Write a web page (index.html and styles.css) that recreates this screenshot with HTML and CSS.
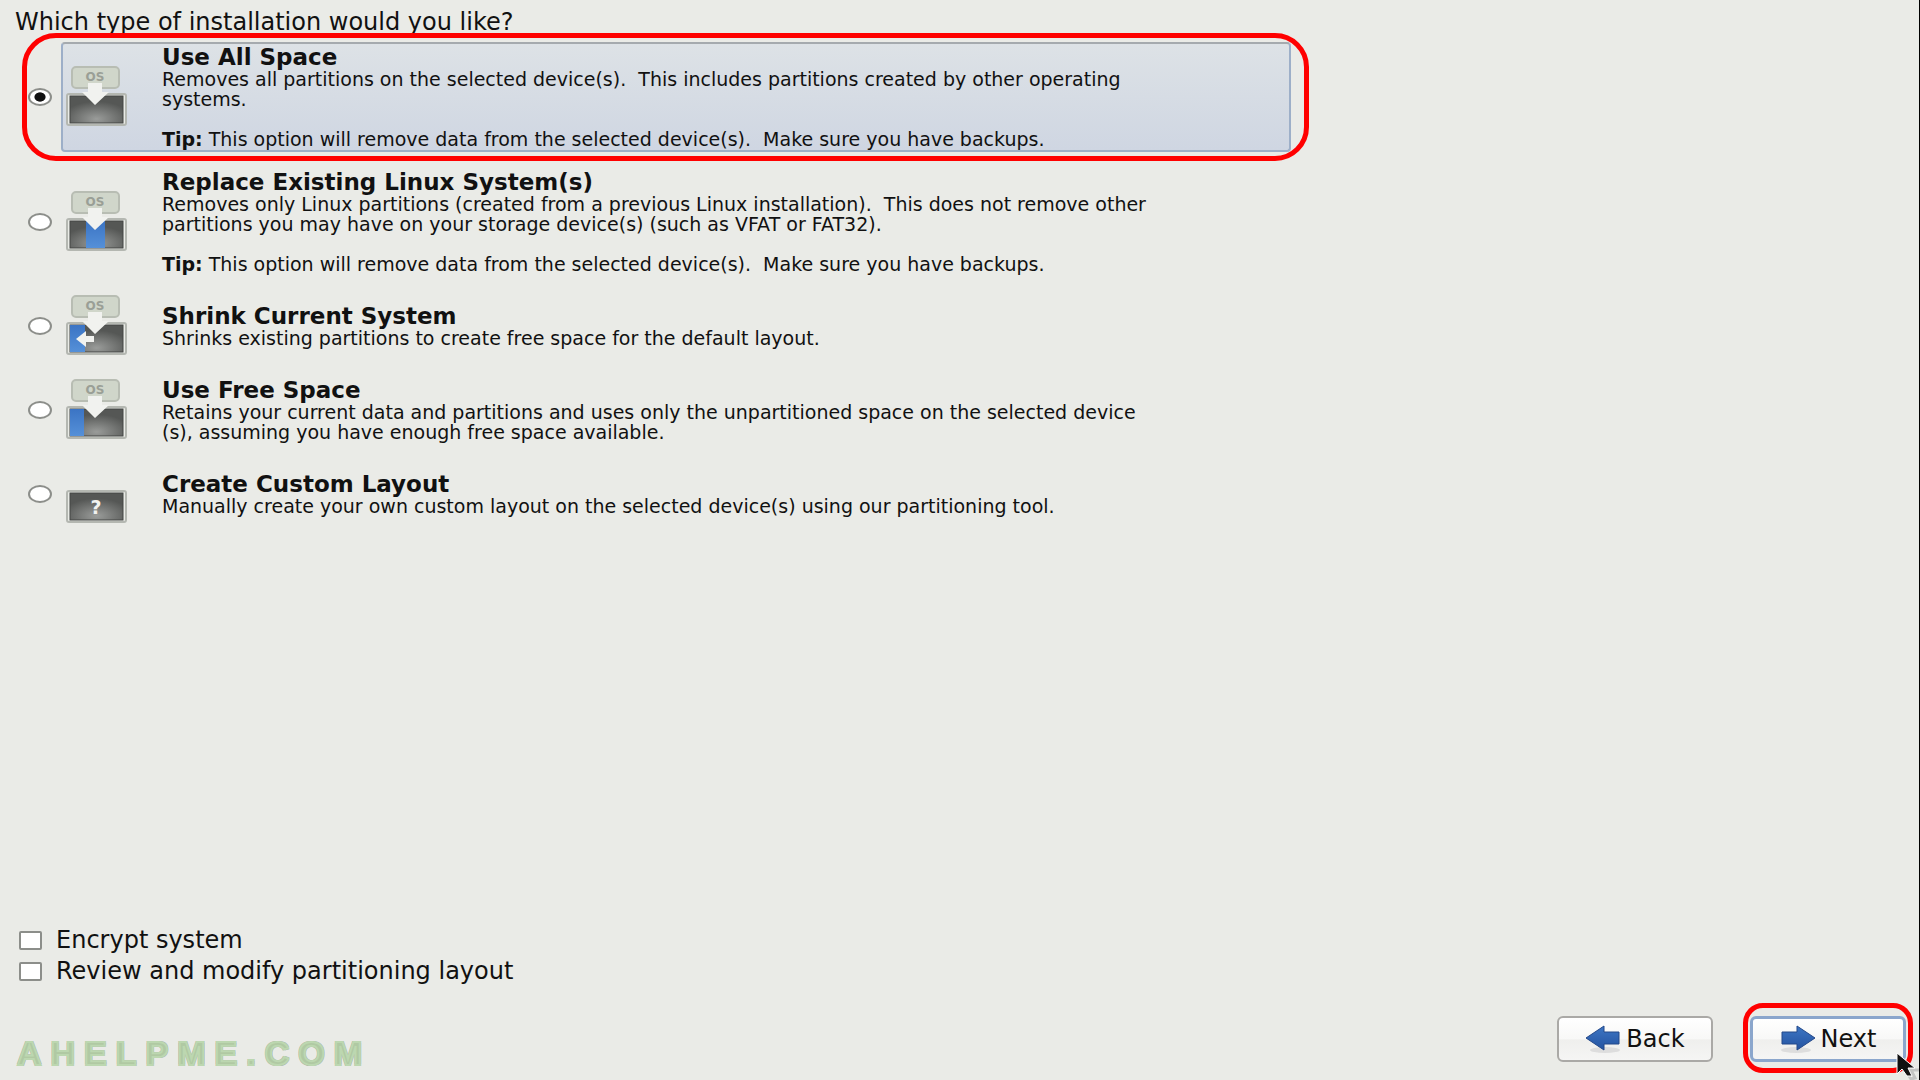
FILE: index.html
```html
<!DOCTYPE html>
<html lang="en">
<head>
	<meta charset="UTF-8">
	<title>Installation Type</title>
	<link rel="stylesheet" href="styles.css">
</head>
<body>
	<!-- Shared gradients and icon parts -->
	<svg class="defs" width="0" height="0" aria-hidden="true">
		<defs>
			<radialGradient id="screen" cx="50%" cy="85%" r="65%">
				<stop offset="0" stop-color="#9a9c9a"/>
				<stop offset="1" stop-color="#555755"/>
			</radialGradient>
			<linearGradient id="arrow-blue" x1="0" y1="0" x2="0" y2="1">
				<stop offset="0" stop-color="#3d76c4"/>
				<stop offset="1" stop-color="#2453a0"/>
			</linearGradient>
			<linearGradient id="part-blue" x1="0" y1="0" x2="0" y2="1">
				<stop offset="0" stop-color="#3b74c4"/>
				<stop offset="1" stop-color="#5590d8"/>
			</linearGradient>
			<g id="disk">
				<rect x="1" y="28" width="59" height="31" rx="2" fill="#e9ebe6" stroke="#b4b7b1" stroke-width="2"/>
				<rect x="4" y="30" width="53" height="27" fill="url(#screen)" stroke="#444644"/>
			</g>
			<g id="os">
				<rect x="6" y="1" width="47" height="21" rx="4" fill="#d0d6ca" stroke="#b8bdb3" stroke-width="2"/>
				<text x="29" y="15" class="os-text">OS</text>
				<path d="M22 17h14v9h7L29 39 16 26h6z" fill="#f1f2ef"/>
			</g>
		</defs>
	</svg>

	<form class="installer">
		<fieldset class="options">
			<legend>Which type of installation would you like?</legend>

			<div class="option highlighted">
				<input type="radio" name="type" id="use_all" checked>
				<label for="use_all">
					<svg width="61" height="60" viewBox="0 0 61 60" aria-hidden="true">
						<use href="#disk"/>
						<use href="#os"/>
					</svg>
					<span class="text">
						<strong class="title">Use All Space</strong>
						<span class="desc">Removes all partitions on the selected device(s).&nbsp; This includes partitions created by other operating<br>systems.<br><br><b>Tip:</b> This option will remove data from the selected device(s).&nbsp; Make sure you have backups.</span>
					</span>
				</label>
			</div>

			<div class="option">
				<input type="radio" name="type" id="replace">
				<label for="replace">
					<svg width="61" height="60" viewBox="0 0 61 60" aria-hidden="true">
						<use href="#disk"/>
						<rect x="20" y="30" width="19" height="27" fill="url(#part-blue)"/>
						<use href="#os"/>
					</svg>
					<span class="text">
						<strong class="title">Replace Existing Linux System(s)</strong>
						<span class="desc">Removes only Linux partitions (created from a previous Linux installation).&nbsp; This does not remove other<br>partitions you may have on your storage device(s) (such as VFAT or FAT32).<br><br><b>Tip:</b> This option will remove data from the selected device(s).&nbsp; Make sure you have backups.</span>
					</span>
				</label>
			</div>

			<div class="option">
				<input type="radio" name="type" id="shrink">
				<label for="shrink">
					<svg width="61" height="60" viewBox="0 0 61 60" aria-hidden="true">
						<use href="#disk"/>
						<rect x="4" y="30" width="15" height="27" fill="url(#part-blue)"/>
						<use href="#os"/>
						<path d="M10 44l10-8v5h8v6h-8v5z" fill="#f1f2ef"/>
					</svg>
					<span class="text">
						<strong class="title">Shrink Current System</strong>
						<span class="desc">Shrinks existing partitions to create free space for the default layout.</span>
					</span>
				</label>
			</div>

			<div class="option">
				<input type="radio" name="type" id="use_free">
				<label for="use_free">
					<svg width="61" height="60" viewBox="0 0 61 60" aria-hidden="true">
						<use href="#disk"/>
						<rect x="4" y="30" width="14" height="27" fill="url(#part-blue)"/>
						<use href="#os"/>
					</svg>
					<span class="text">
						<strong class="title">Use Free Space</strong>
						<span class="desc">Retains your current data and partitions and uses only the unpartitioned space on the selected device<br>(s), assuming you have enough free space available.</span>
					</span>
				</label>
			</div>

			<div class="option">
				<input type="radio" name="type" id="custom">
				<label for="custom">
					<svg width="61" height="60" viewBox="0 0 61 60" aria-hidden="true">
						<use href="#disk"/>
						<text x="30" y="51" class="question-mark">?</text>
					</svg>
					<span class="text">
						<strong class="title">Create Custom Layout</strong>
						<span class="desc">Manually create your own custom layout on the selected device(s) using our partitioning tool.</span>
					</span>
				</label>
			</div>
		</fieldset>

		<div class="checks">
			<div class="check">
				<input type="checkbox" id="encrypt">
				<label for="encrypt">Encrypt system</label>
			</div>
			<div class="check">
				<input type="checkbox" id="review">
				<label for="review">Review and modify partitioning layout</label>
			</div>
		</div>

		<footer>
			<div class="watermark">AHELPME.COM</div>
			<div class="buttons">
				<button type="button">
					<svg width="36" height="30" viewBox="0 0 36 30" aria-hidden="true">
						<ellipse cx="20" cy="26" rx="15" ry="3" fill="#ddd"/>
						<path d="M1 14L19 2v6h15v12H19v6z" fill="url(#arrow-blue)" stroke="#23488a"/>
					</svg>
					Back
				</button>
				<button type="button" class="next">
					<svg width="36" height="30" viewBox="0 0 36 30" aria-hidden="true">
						<ellipse cx="16" cy="26" rx="15" ry="3" fill="#ddd"/>
						<path d="M35 14L17 2v6H2v12h15v6z" fill="url(#arrow-blue)" stroke="#23488a"/>
					</svg>
					Next
				</button>
			</div>
		</footer>
	</form>

	<svg class="pointer" width="24" height="28" viewBox="0 0 24 28" aria-hidden="true">
		<path d="M10 19l5 8 4-1-4-8h8" fill="none" stroke="#c4c5c3" stroke-width="3"/>
		<path d="M1 1v21l5-5 5 7h5l-4-8h7z" fill="#111" stroke="#fff"/>
	</svg>
</body>
</html>
```

FILE: styles.css
```css
:root {
	--color-background: #eaebe7;
	--color-text: #111;
	--color-ring: #f00;
	--color-border: #8c8e8a;
	--color-focus: #8ba6cc;
}

* {
	box-sizing: border-box;
}

body {
	margin: 0;
	background: var(--color-background);
	color: var(--color-text);
	font-family: "DejaVu Sans", Verdana, sans-serif;
	font-size: 24px;
}

.defs {
	position: absolute;
}

.installer {
	display: flex;
	flex-direction: column;
	min-height: 100vh;
	border-right: 1px solid #000;
}

/* Installation types */
.options {
	display: flex;
	flex-direction: column;
	gap: 15px;
	width: 70%;
	margin: 0;
	padding: 0 0 0 28px;
	border: 0;
}

legend {
	margin-left: -28px;
	padding: 10px 0 8px 15px;
	line-height: 24px;
}

.option {
	display: flex;
	align-items: center;
	gap: 9px;
	position: relative;
}

.option label {
	display: flex;
	align-items: center;
	flex: 1;
	gap: 35px;
	padding: 2px 4px;
	border: 1px solid transparent;
	border-radius: 4px;
}

.option svg {
	flex: none;
	margin-bottom: 2px;
}

.highlighted {
	width: 96%;
}

.highlighted label {
	border: 2px solid #9dafc8;
	border-top-color: #a5aaae;
	padding: 1px 3px;
	background: linear-gradient(#dde2e6, #cfd6e2);
}

.title,
.desc {
	display: block;
}

.title {
	font-size: 23px;
	line-height: 24px;
}

.desc {
	font-size: 19px;
	line-height: 20px;
	white-space: nowrap;
}

.os-text {
	font: bold 12px "DejaVu Sans", sans-serif;
	fill: #9a9f96;
	text-anchor: middle;
}

.question-mark {
	font: bold 19px "DejaVu Sans", sans-serif;
	fill: #f1f2ef;
	text-anchor: middle;
}

/* Red markers */
.highlighted::after,
.next::after {
	content: "";
	position: absolute;
	border: 5px solid var(--color-ring);
	pointer-events: none;
}

.highlighted::after {
	inset: -9px -18px -9px -6px;
	border-radius: 34px;
}

.next::after {
	inset: -16px -10px -14px -10px;
	border-radius: 20px;
}

/* Form controls */
input {
	appearance: none;
	flex: none;
	margin: 0;
	background: #fff;
}

input[type="radio"] {
	width: 24px;
	height: 18px;
	border: 2px solid var(--color-border);
	border-radius: 50%;
}

input[type="radio"]:checked {
	background: radial-gradient(ellipse 6px 5px, #111 85%, #fff);
}

input[type="checkbox"] {
	width: 23px;
	height: 19px;
	border: 2px solid var(--color-border);
	border-radius: 2px;
}

.checks {
	margin-top: auto;
	padding-left: 19px;
}

.check {
	display: flex;
	align-items: center;
	gap: 14px;
	line-height: 31px;
}

footer {
	display: flex;
	justify-content: space-between;
	align-items: flex-start;
	padding: 29px 13px 18px 17px;
}

.watermark {
	margin: 16px 0 -12px;
	color: #b0c9a3;
	font: bold 34px/42px "Liberation Sans", Arial, sans-serif;
	letter-spacing: 9px;
	-webkit-text-stroke: 2px #bcd7b0;
	text-shadow: 1px 1px #a9b3a5, -1px -1px #a9b3a5, 1px -1px #a9b3a5, -1px 1px #a9b3a5;
}

.buttons {
	display: flex;
	gap: 37px;
}

button {
	display: flex;
	align-items: center;
	justify-content: center;
	gap: 5px;
	position: relative;
	width: 156px;
	height: 46px;
	padding: 0;
	border: 2px solid #aaa9a6;
	border-radius: 6px;
	background: linear-gradient(#fff, #f8f8f7 50%, #efefed 52%, #f5f5f4);
	color: var(--color-text);
	font: inherit;
}

.next {
	border: 3px solid var(--color-focus);
}

.pointer {
	position: absolute;
	right: 0;
	bottom: 0;
}
```
